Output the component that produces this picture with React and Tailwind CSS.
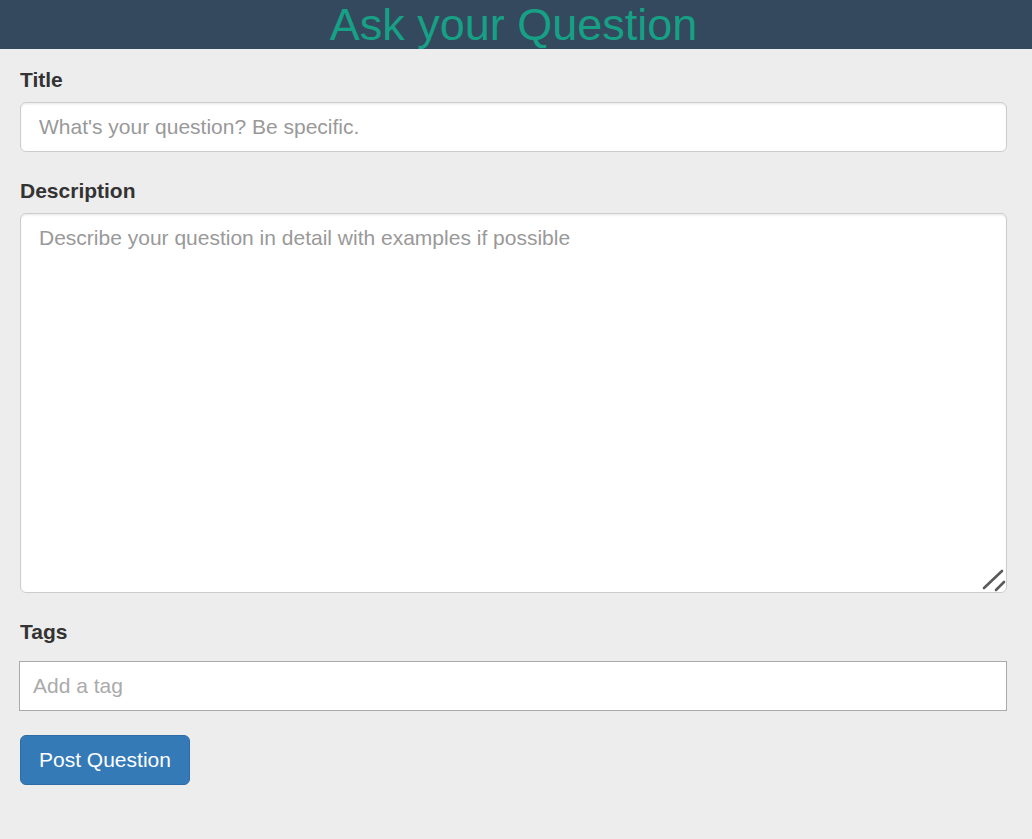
export default function App() {
  return (
    <div className="min-h-[839px] bg-[#ededed] font-['Liberation_Sans',Arial,sans-serif] text-[#333]">
      {/* Header */}
      <div className="h-[49px] overflow-hidden bg-[#34495e]">
        <h1 className="pr-[5px] text-center text-[45px] leading-[49px] font-normal text-[#16a085]">Ask your Question</h1>
      </div>

      <form className="px-5 pt-[16px]" onSubmit={(e) => e.preventDefault()}>
        <div className="mb-[24px]">
          <label className="block text-[21px] leading-[30px] font-bold mb-[7px]">Title</label>
          <input
            type="text"
            placeholder="What's your question? Be specific."
            className="block w-[987px] h-[50px] px-[18px] text-[21px] bg-white border border-[#ccc] rounded-[6px] shadow-[inset_0_1.5px_1.5px_rgba(0,0,0,0.075)] placeholder:text-[#999] outline-none"
          />
        </div>

        <div className="mb-[24px]">
          <label className="block text-[21px] leading-[30px] font-bold mb-[7px]">Description</label>
          <div className="relative w-[987px]">
            <textarea
              placeholder="Describe your question in detail with examples if possible"
              className="block w-[987px] h-[380px] resize-none px-[18px] py-[9px] text-[21px] leading-[30px] bg-white border border-[#ccc] rounded-[6px] shadow-[inset_0_1.5px_1.5px_rgba(0,0,0,0.075)] placeholder:text-[#999] outline-none"
            />
            {/* resize grip */}
            <svg className="absolute right-[1px] bottom-[1px] pointer-events-none" width="24" height="24" viewBox="0 0 24 24">
              <line x1="2" y1="20" x2="20" y2="3" stroke="#5a5a5a" strokeWidth="2.6" strokeLinecap="round" />
              <line x1="14" y1="22" x2="22" y2="14" stroke="#5a5a5a" strokeWidth="2.6" strokeLinecap="round" />
            </svg>
          </div>
        </div>

        <div className="mb-[24px]">
          <label className="block text-[21px] leading-[30px] font-bold mb-[14px]">Tags</label>
          <input
            type="text"
            placeholder="Add a tag"
            className="block -ml-px w-[988px] h-[50px] px-[13px] text-[21px] bg-white border border-[#aaa] placeholder:text-[#aaa] outline-none"
          />
        </div>

        <button
          type="submit"
          className="h-[50px] px-[18px] text-[21px] text-white bg-[#337ab7] border border-[#2e6da4] rounded-[6px]"
        >
          Post Question
        </button>
      </form>
    </div>
  );
}
